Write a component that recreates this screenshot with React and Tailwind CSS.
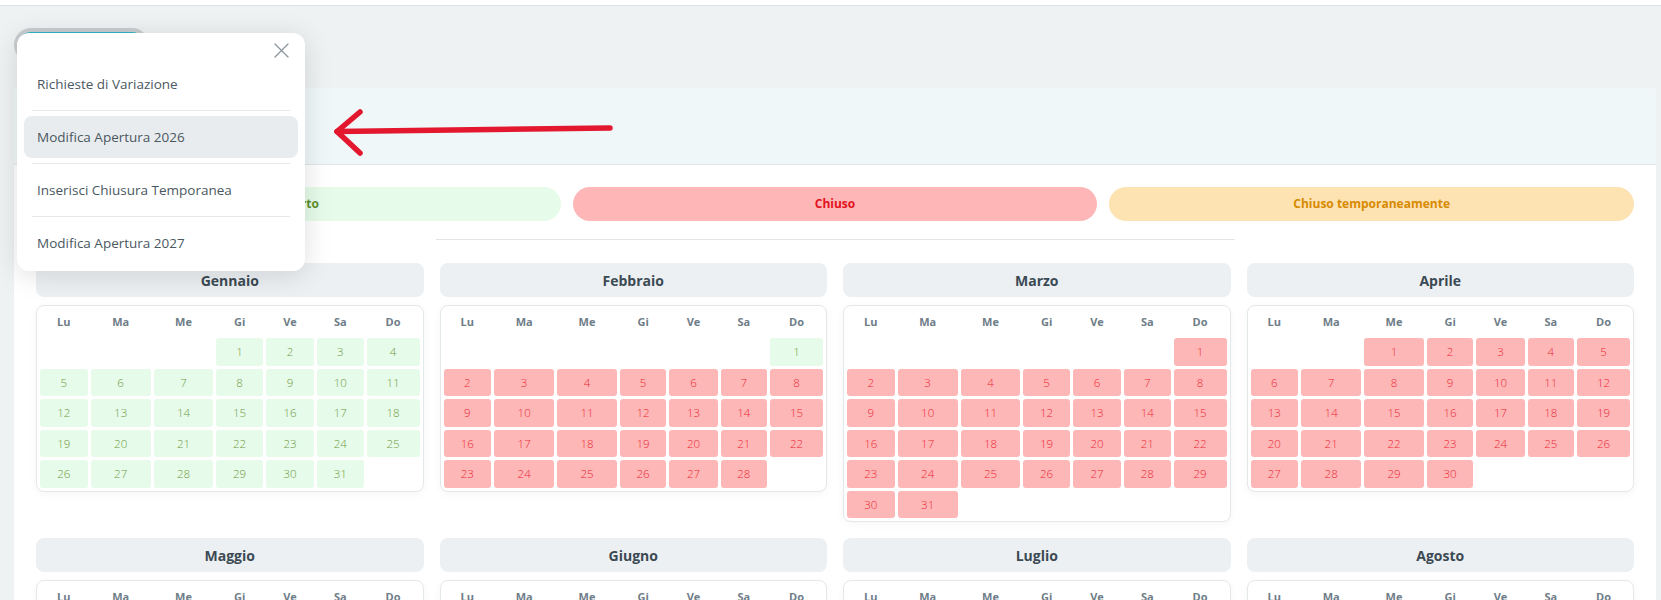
import React from 'react';

const WEEKDAYS = ['Lu', 'Ma', 'Me', 'Gi', 'Ve', 'Sa', 'Do'];

// name, days in month, weekday of the 1st (0 = lunedì) for 2026
const MONTHS = [
  ['Gennaio', 31, 3],
  ['Febbraio', 28, 6],
  ['Marzo', 31, 6],
  ['Aprile', 30, 2],
  ['Maggio', 31, 4],
  ['Giugno', 30, 0],
  ['Luglio', 31, 2],
  ['Agosto', 31, 5],
  ['Settembre', 30, 1],
  ['Ottobre', 31, 3],
  ['Novembre', 30, 6],
  ['Dicembre', 31, 1],
];

const MENU = [
  'Richieste di Variazione',
  'Modifica Apertura 2026',
  'Inserisci Chiusura Temporanea',
  'Modifica Apertura 2027',
];

const isOpen = (month, day) => month === 0 || (month === 1 && day === 1);

function buildWeeks(days, offset) {
  const cells = [];
  for (let i = 0; i < offset; i++) cells.push(null);
  for (let d = 1; d <= days; d++) cells.push(d);
  while (cells.length % 7 !== 0) cells.push(null);
  const weeks = [];
  for (let i = 0; i < cells.length; i += 7) weeks.push(cells.slice(i, i + 7));
  return weeks;
}

function MonthCalendar({ name, days, offset, index }) {
  const weeks = buildWeeks(days, offset);
  return (
    <div>
      <div className="h-[34px] rounded-lg bg-[#ecf0f3] flex items-center justify-center text-[14px] font-bold text-[#3c4a54]">
        {name}
      </div>
      <div className="mt-2 rounded-lg border border-[#e3e8eb] bg-white shadow-[0_2px_8px_rgba(0,0,0,0.04)]">
        <table className="w-full border-separate border-spacing-[3px]">
          <thead>
            <tr>
              {WEEKDAYS.map((w) => (
                <th key={w} className="h-[26px] text-[11px] font-bold text-[#6f7d88]">
                  {w}
                </th>
              ))}
            </tr>
          </thead>
          <tbody>
            {weeks.map((week, wi) => (
              <tr key={wi}>
                {week.map((day, di) =>
                  day === null ? (
                    <td key={di} className="h-[27.5px]" />
                  ) : isOpen(index, day) ? (
                    <td
                      key={di}
                      className="h-[27.5px] rounded-[3px] bg-[#e6fbe9] text-center text-[11.5px] font-light text-[#6f9a42]"
                    >
                      {day}
                    </td>
                  ) : (
                    <td
                      key={di}
                      className="h-[27.5px] rounded-[3px] bg-[#feb7b7] text-center text-[11.5px] font-light text-[#ea2a36]"
                    >
                      {day}
                    </td>
                  )
                )}
              </tr>
            ))}
          </tbody>
        </table>
      </div>
    </div>
  );
}

export default function App() {
  return (
    <div className="relative min-h-screen bg-[#eff2f3] font-['Open_Sans',sans-serif] overflow-hidden">
      {/* Top bar */}
      <div className="h-[6px] bg-white border-b border-[#dde2e5]" />

      <div className="pl-[14px] pr-[5px] pt-[22px]">
        {/* Actions button (covered by the open menu) */}
        <button className="h-[34px] w-[135px] rounded-full border-4 border-[#c9cdd0] bg-[#31b4c6] text-white text-sm">
          Azioni
        </button>

        {/* Main card */}
        <div className="mt-[26px] rounded-t bg-white">
          <div className="h-[77px] rounded-t bg-[#eff7f9] border-b border-[#dfe7ea]" />

          <div className="px-[22px] pt-[22px] pb-8">
            {/* Legend */}
            <div className="grid grid-cols-3 gap-3">
              <div className="h-[34px] rounded-full bg-[#e6fbe9] flex items-center justify-center text-[12px] font-bold text-[#5e8f2e]">
                Aperto
              </div>
              <div className="h-[34px] rounded-full bg-[#feb6b6] flex items-center justify-center text-[12px] font-bold text-[#e3131f]">
                Chiuso
              </div>
              <div className="h-[34px] rounded-full bg-[#fde2b2] flex items-center justify-center text-[12px] font-bold text-[#d88a00]">
                Chiuso temporaneamente
              </div>
            </div>

            <div className="mt-[18px] w-1/2 mx-auto border-t border-[#e2e5e7]" />

            {/* Months */}
            <div className="mt-[23px] grid grid-cols-4 gap-x-4 gap-y-4 items-start">
              {MONTHS.map(([name, days, offset], i) => (
                <MonthCalendar key={name} name={name} days={days} offset={offset} index={i} />
              ))}
            </div>
          </div>
        </div>
      </div>

      {/* Open actions menu */}
      <div className="absolute left-[17px] top-[33px] w-[288px] rounded-xl bg-white px-[7px] pb-[7px] shadow-[0_4px_28px_rgba(0,0,0,0.13)]">
        <div className="h-[30px] flex justify-end items-start pt-[10px] pr-[9px]">
          <svg width="15" height="15" viewBox="0 0 15 15" fill="none" stroke="#8c969c" strokeWidth="1.3" strokeLinecap="round">
            <path d="M1 1L14 14M14 1L1 14" />
          </svg>
        </div>
        {MENU.map((label, i) => (
          <div key={label}>
            {i > 0 && <div className="mx-2 my-[5px] h-px bg-[#e6e9eb]" />}
            <div
              className={
                i === 1
                  ? 'h-[42px] px-[13px] flex items-center rounded-lg bg-[#e9ecef] text-[13.5px] text-[#4a5861]'
                  : 'h-[42px] px-[13px] flex items-center rounded-lg text-[13.5px] text-[#4a5861]'
              }
            >
              {label}
            </div>
          </div>
        ))}
      </div>

      {/* Red pointer arrow */}
      <svg
        className="absolute left-[330px] top-[105px] pointer-events-none"
        width="290"
        height="55"
        viewBox="0 0 290 55"
        fill="none"
        stroke="#e3172d"
        strokeWidth="5.5"
        strokeLinecap="round"
        strokeLinejoin="round"
      >
        <path d="M280 23L7 26.5" />
        <path d="M30 7L7 26.5L30 48" />
      </svg>
    </div>
  );
}
